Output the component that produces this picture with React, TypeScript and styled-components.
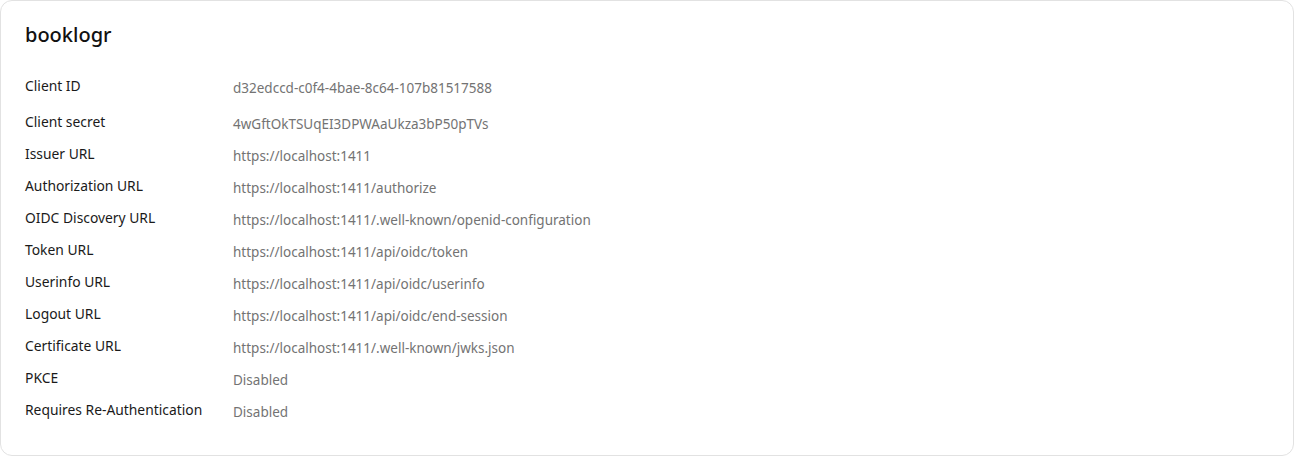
import React from "react";
import styled, { createGlobalStyle } from "styled-components";

const Global = createGlobalStyle`
  html, body { margin: 0; padding: 0; background: #ffffff; }
  body { font-family: "Noto Sans", "Open Sans", sans-serif; }
  * { box-sizing: border-box; }
`;

const Card = styled.div`
  width: 1294px;
  height: 456px;
  border: 1px solid #e2e2e2;
  border-radius: 12px;
  background: #fff;
  padding: 20px 24px 0 24px;
`;

const Title = styled.h2`
  margin: 0 0 21px 0;
  font-size: 20px;
  font-weight: 500;
  line-height: 28px;
  color: #111;
`;

const Table = styled.div`
  display: grid;
  grid-template-columns: 208px 1fr;
`;

const Label = styled.div<{ $tall?: boolean }>`
  font-size: 13.85px;
  line-height: 32px;
  height: ${(p) => (p.$tall ? "36px" : "32px")};
  color: #1a1a1a;
`;

const Value = styled.div<{ $tall?: boolean }>`
  font-size: 13.5px;
  line-height: 32px;
  height: ${(p) => (p.$tall ? "36px" : "32px")};
  color: #737373;
  padding-top: 2px;
`;

const rows: [string, string][] = [
  ["Client ID", "d32edccd-c0f4-4bae-8c64-107b81517588"],
  ["Client secret", "4wGftOkTSUqEI3DPWAaUkza3bP50pTVs"],
  ["Issuer URL", "https://localhost:1411"],
  ["Authorization URL", "https://localhost:1411/authorize"],
  ["OIDC Discovery URL", "https://localhost:1411/.well-known/openid-configuration"],
  ["Token URL", "https://localhost:1411/api/oidc/token"],
  ["Userinfo URL", "https://localhost:1411/api/oidc/userinfo"],
  ["Logout URL", "https://localhost:1411/api/oidc/end-session"],
  ["Certificate URL", "https://localhost:1411/.well-known/jwks.json"],
  ["PKCE", "Disabled"],
  ["Requires Re-Authentication", "Disabled"],
];

export default function App() {
  return (
    <>
      <Global />
      <Card>
        <Title>booklogr</Title>
        <Table>
          {rows.map(([l, v], i) => (
            <React.Fragment key={l}>
              <Label $tall={i === 0}>{l}</Label>
              <Value $tall={i === 0}>{v}</Value>
            </React.Fragment>
          ))}
        </Table>
      </Card>
    </>
  );
}
